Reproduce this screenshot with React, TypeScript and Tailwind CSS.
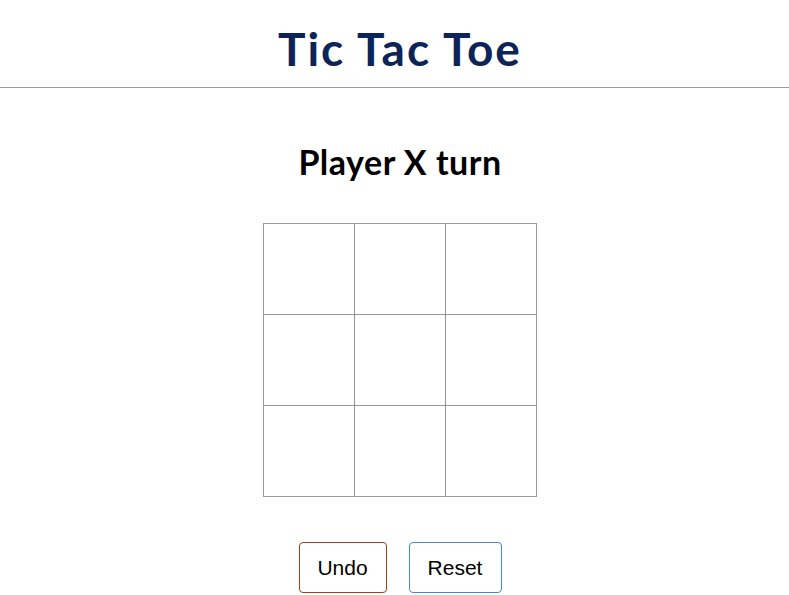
import { useState } from "react";

type Cell = "X" | "O" | null;

export default function App() {
  const [cells, setCells] = useState<Cell[]>(Array(9).fill(null));
  const [history, setHistory] = useState<Cell[][]>([]);
  const xTurn = cells.filter(Boolean).length % 2 === 0;

  const play = (i: number) => {
    if (cells[i]) return;
    setHistory([...history, cells]);
    const next = cells.slice();
    next[i] = xTurn ? "X" : "O";
    setCells(next);
  };

  const undo = () => {
    if (!history.length) return;
    setCells(history[history.length - 1]);
    setHistory(history.slice(0, -1));
  };

  const reset = () => {
    setCells(Array(9).fill(null));
    setHistory([]);
  };

  return (
    <div className="min-h-screen w-full overflow-hidden bg-white">
      <div className="w-[800px]" style={{ fontFamily: "Lato, 'Noto Sans', sans-serif" }}>
        {/* Header */}
        <header className="border-b border-[#9a9a9a] pt-[22px] pb-[12px] text-center">
          <h1 className="text-[46px] font-bold leading-[53px] tracking-[2px] text-[#0c2457]">Tic Tac Toe</h1>
        </header>

        <main className="flex flex-col items-center">
          <h2 className="mt-[54px] text-[34px] font-bold leading-[40px] tracking-[0.5px] text-black">
            Player {xTurn ? "X" : "O"} turn
          </h2>

          {/* Board */}
          <div className="mt-[41px] grid grid-cols-3 border-l border-t border-[#9a9a9a]">
            {cells.map((c, i) => (
              <button
                key={i}
                onClick={() => play(i)}
                className="flex h-[91px] w-[91px] cursor-pointer items-center justify-center border-b border-r border-[#9a9a9a] text-5xl font-bold text-[#0c2457]"
              >
                {c}
              </button>
            ))}
          </div>

          {/* Controls */}
          <div className="mt-[45px] flex gap-[22px]" style={{ fontFamily: "'Liberation Sans', Arial, sans-serif" }}>
            <button
              onClick={undo}
              className="h-[51px] w-[88px] rounded-[4px] border border-[#a3401c] text-[21px] text-black"
            >
              Undo
            </button>
            <button
              onClick={reset}
              className="h-[51px] w-[93px] rounded-[4px] border border-[#4a86d6] text-[21px] text-black"
            >
              Reset
            </button>
          </div>
        </main>
      </div>
    </div>
  );
}
